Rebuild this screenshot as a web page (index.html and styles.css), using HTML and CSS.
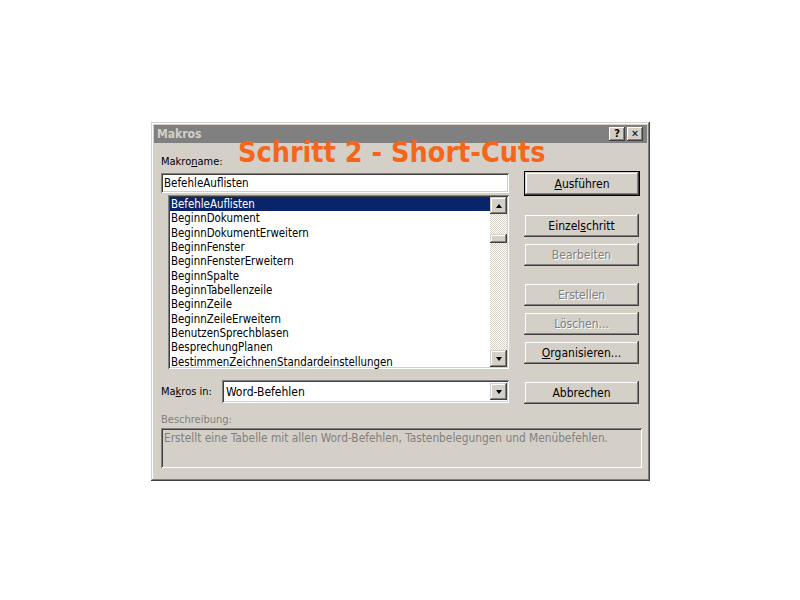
FILE: index.html
```html
<!DOCTYPE html>
<html lang="de">
<head>
  <meta charset="UTF-8">
  <title>Makros</title>
  <link rel="stylesheet" href="styles.css">
</head>
<body>
<div class="dialog">
  <!-- Titelleiste -->
  <div class="titlebar">
    <span class="title-text">Makros</span>
    <div class="title-buttons">
      <span class="tbtn">?</span>
      <span class="tbtn close">&#x2715;</span>
    </div>
  </div>

  <h1 class="overlay-title">Schritt 2 - Short-Cuts</h1>

  <div class="dialog-body">
    <div class="main-row">
      <!-- linke Spalte -->
      <div class="left-col">
        <div class="label">Makro<u>n</u>ame:</div>
        <div class="textbox">BefehleAuflisten</div>
        <div class="listbox">
          <ul class="items">
            <li class="selected">BefehleAuflisten</li>
            <li>BeginnDokument</li>
            <li>BeginnDokumentErweitern</li>
            <li>BeginnFenster</li>
            <li>BeginnFensterErweitern</li>
            <li>BeginnSpalte</li>
            <li>BeginnTabellenzeile</li>
            <li>BeginnZeile</li>
            <li>BeginnZeileErweitern</li>
            <li>BenutzenSprechblasen</li>
            <li>BesprechungPlanen</li>
            <li>BestimmenZeichnenStandardeinstellungen</li>
          </ul>
          <div class="scrollbar">
            <span class="sbtn"><span class="arrow up"></span></span>
            <div class="track"><span class="thumb"></span></div>
            <span class="sbtn"><span class="arrow down"></span></span>
          </div>
        </div>
        <div class="macros-in">
          <span class="label">Ma<u>k</u>ros in:</span>
          <div class="combo">
            <span class="combo-text">Word-Befehlen</span>
            <span class="sbtn"><span class="arrow down"></span></span>
          </div>
        </div>
      </div>

      <!-- rechte Spalte: Schaltflächen -->
      <div class="right-col">
        <div class="default-frame"><button class="btn"><u>A</u>usführen</button></div>
        <button class="btn gap-lg">Einzel<u>s</u>chritt</button>
        <button class="btn" disabled>Bearbeiten</button>
        <button class="btn gap-xl" disabled>Erstellen</button>
        <button class="btn" disabled>Löschen...</button>
        <button class="btn"><u>O</u>rganisieren...</button>
        <button class="btn gap-xl">Abbrechen</button>
      </div>
    </div>

    <div class="label disabled-label">Beschreibung:</div>
    <div class="description">Erstellt eine Tabelle mit allen Word-Befehlen, Tastenbelegungen und Menübefehlen.</div>
  </div>
</div>
</body>
</html>
```

FILE: styles.css
```css
/* Grundlayout */
body {
  margin: 0;
  background: #fff;
  font-family: 'DejaVu Sans Condensed', 'DejaVu Sans', sans-serif;
  font-size: 11px;
  color: #000;
}
/* Dialogfenster im Windows-2000-Stil */
.dialog {
  position: relative;
  box-sizing: border-box;
  width: 499px;
  height: 359px;
  margin: 122px 0 0 151px;
  padding: 3px;
  background: #d4d0c8;
  box-shadow: inset -1px -1px #404040, inset 1px 1px #d4d0c8, inset -2px -2px #808080, inset 2px 2px #fff;
}
.titlebar {
  height: 18px;
  background: #808080;
  display: flex;
  align-items: center;
  justify-content: space-between;
  padding: 0 4px 0 3px;
}
.title-text {
  color: #d4d0c8;
  font-weight: bold;
  font-size: 12px;
}
.title-buttons {
  display: flex;
  gap: 2px;
}
.tbtn {
  width: 16px;
  height: 14px;
  box-sizing: border-box;
  background: #d4d0c8;
  box-shadow: inset -1px -1px #404040, inset 1px 1px #fff, inset -2px -2px #808080;
  font-weight: bold;
  font-size: 11px;
  line-height: 14px;
  text-align: center;
}
.tbtn.close {
  font-size: 10px;
}
/* Orange Überschrift über dem Dialog */
.overlay-title {
  position: absolute;
  left: 87px;
  top: 14px;
  margin: 0;
  font-family: 'DejaVu Sans Condensed', 'DejaVu Sans', sans-serif;
  font-size: 28.5px;
  font-weight: bold;
  color: #f5661c;
  white-space: nowrap;
  line-height: 34px;
}
.dialog-body {
  padding: 12px 4px 0 7px;
}
.main-row {
  display: flex;
  gap: 15px;
}
.left-col {
  width: 348px;
}
.label {
  line-height: 14px;
  height: 14px;
}
.textbox {
  margin-top: 4px;
  height: 20px;
  box-sizing: border-box;
  background: #fff;
  padding: 2px 3px;
  line-height: 16px;
  font-size: 11.5px;
  box-shadow: inset 1px 1px #808080, inset -1px -1px #fff, inset 2px 2px #404040, inset -2px -2px #d4d0c8;
}
/* Listenfeld */
.listbox {
  margin: 2px 0 0 7px;
  height: 174px;
  box-sizing: border-box;
  background: #fff;
  padding: 2px;
  display: flex;
  box-shadow: inset 1px 1px #808080, inset -1px -1px #fff, inset 2px 2px #404040, inset -2px -2px #d4d0c8;
}
.items {
  list-style: none;
  margin: 0;
  padding: 0;
  flex: 1;
  font-size: 11.4px;
}
.items li {
  height: 14.35px;
  line-height: 14px;
  padding-left: 1px;
}
.items li.selected {
  background: #0a246a;
  color: #fff;
}
.scrollbar {
  width: 17px;
  display: flex;
  flex-direction: column;
}
.sbtn {
  width: 17px;
  height: 17px;
  box-sizing: border-box;
  background: #d4d0c8;
  box-shadow: inset -1px -1px #404040, inset 1px 1px #d4d0c8, inset -2px -2px #808080, inset 2px 2px #fff;
  display: flex;
  align-items: center;
  justify-content: center;
  flex-shrink: 0;
}
.arrow {
  width: 0;
  height: 0;
  border-left: 3.5px solid transparent;
  border-right: 3.5px solid transparent;
}
.arrow.up {
  border-bottom: 4px solid #000;
}
.arrow.down {
  border-top: 4px solid #000;
}
.track {
  flex: 1;
  background: repeating-conic-gradient(#fff 0 25%, #d4d0c8 0 50%) 0 0 / 2px 2px;
  padding-top: 20px;
}
.thumb {
  display: block;
  height: 9px;
  background: #d4d0c8;
  box-shadow: inset -1px -1px #404040, inset 1px 1px #d4d0c8, inset -2px -2px #808080, inset 2px 2px #fff;
}
/* Makros in: Kombinationsfeld */
.macros-in {
  margin-top: 11px;
  display: flex;
  align-items: center;
  gap: 10px;
}
.combo {
  flex: 1;
  height: 23px;
  box-sizing: border-box;
  background: #fff;
  padding: 2px;
  display: flex;
  align-items: center;
  box-shadow: inset 1px 1px #808080, inset -1px -1px #fff, inset 2px 2px #404040, inset -2px -2px #d4d0c8;
}
.combo-text {
  flex: 1;
  padding-left: 2px;
  font-size: 12px;
}
/* Schaltflächen */
.right-col {
  width: 116px;
  margin-top: 16px;
  display: flex;
  flex-direction: column;
  gap: 6px;
}
.default-frame {
  border: 1px solid #000;
  height: 25px;
  box-sizing: border-box;
}
.btn {
  width: 115px;
  height: 23px;
  box-sizing: border-box;
  border: none;
  background: #d4d0c8;
  font-family: inherit;
  font-size: 12px;
  color: #000;
  padding: 0;
  box-shadow: inset -1px -1px #404040, inset 1px 1px #d4d0c8, inset -2px -2px #808080, inset 2px 2px #fff;
}
.default-frame .btn {
  width: 114px;
  height: 23px;
}
.btn:disabled {
  color: #808080;
  text-shadow: 1px 1px #fff;
}
.gap-lg {
  margin-top: 12px;
}
.gap-xl {
  margin-top: 11px;
}
.disabled-label {
  margin-top: 9px;
  color: #808080;
}
.description {
  margin-top: 1px;
  width: 481px;
  height: 40px;
  box-sizing: border-box;
  padding: 3px 3px;
  color: #808080;
  font-size: 11.8px;
  line-height: 14px;
  box-shadow: inset 1px 1px #808080, inset -1px -1px #fff, inset 2px 2px #404040, inset -2px -2px #d4d0c8;
}
```
